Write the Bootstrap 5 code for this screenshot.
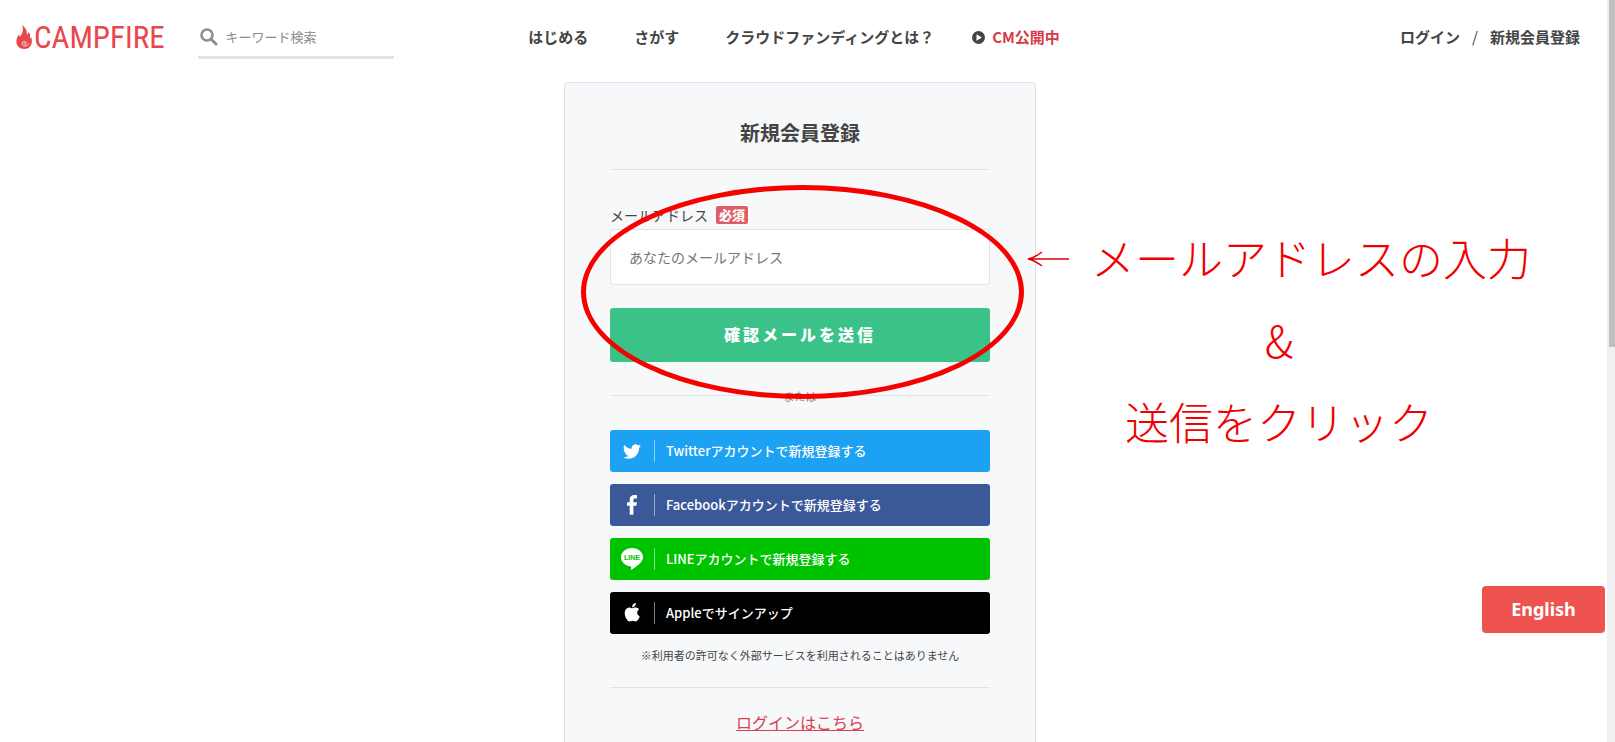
<!DOCTYPE html>
<html lang="ja">
<head>
<meta charset="utf-8">
<meta name="viewport" content="width=device-width, initial-scale=1">
<title>新規会員登録 - CAMPFIRE</title>
<link href="https://cdn.jsdelivr.net/npm/bootstrap@5.3.0/dist/css/bootstrap.min.css" rel="stylesheet">
<style>
  body { font-family: "Noto Sans CJK JP", sans-serif; font-size: 14px; color: #444; background: #fff; }
  .shell { padding-right: 15px; }
  .site-header { height: 74px; display: grid; grid-template-columns: 1fr auto 1fr; padding: 0 20px 0 16px; font-size: 15px; }
  .site-header a { color: #444; text-decoration: none; font-weight: 700; white-space: nowrap; }
  .site-header a.brand { color: #e8474c; font-family: "Roboto Condensed", "Liberation Sans Narrow", Roboto, sans-serif; font-size: 31px; font-weight: 400; line-height: 1; }
  .site-header a.cm { color: #d63c48; gap: 7px; }
  .search { width: 196px; height: 43px; margin: 16px 0 0 33px; padding-top: 2px; border-bottom: 3px solid #e2e2e2; }
  .search svg { margin: 0 8px 0 2px; flex: none; }
  .search input { font-size: 13px; color: #444; }
  .search input::placeholder { color: #8c8c8c; opacity: 1; }
  .main-nav { padding-right: 8px; }
  .main-nav a + a { margin-left: 46px; }
  .main-nav a + a.cm { margin-left: 38px; }
  .stage { display: grid; grid-template-columns: 1fr 472px 1fr; margin-top: 8px; }
  .signup { grid-column: 2; min-height: 860px; background: #f6f8fa; border: 1px solid #dde3ea; border-radius: 4px; padding: 34px 45px; }
  .signup h1 { font-size: 20px; line-height: 32px; font-weight: 700; margin: 0 0 20px; text-align: center; }
  .rule { height: 1px; background: #dfe3e6; }
  .field-head { margin-top: 33px; height: 26px; padding-bottom: 2px; }
  .need { background: #e05c66; color: #fff; font-size: 13px; font-weight: 900; line-height: 18px; border-radius: 2px; padding: 0 3px; }
  .mail { height: 56px; border: 1px solid #e0e4e7; border-radius: 4px; padding: 0 18px; font-size: 14px; }
  .mail::placeholder { color: #757575; opacity: 1; }
  .send { height: 54px; margin-top: 23px; padding: 0 0 2px; background: #3ac288; color: #fff; font-size: 16px; font-weight: 900; letter-spacing: 3px; border-radius: 3px; }
  .send:hover { background: #33b07b; color: #fff; }
  .or-line { height: 20px; margin: 23px 0 25px; font-size: 11px; color: #888; gap: 4px; }
  .or-line span { padding-top: 2px; }
  .sns { height: 42px; margin-bottom: 12px; border-radius: 3px; color: #fff; font-size: 13px; font-weight: 500; text-decoration: none; }
  .sns svg { width: 22px; height: 22px; margin: 0 11px; flex: none; }
  .sns span { border-left: 1px solid rgba(255,255,255,.5); padding-left: 11px; line-height: 22px; }
  .tw { background: #1da1f2; } .fb { background: #3b5998; } .ln { background: #00c300; } .ap { background: #000; }
  .caution { font-size: 11px; line-height: 18px; margin: 0 0 23px; text-align: center; }
  .to-login { font-size: 16px; line-height: 20px; color: #d9414d; }
  .ring { position: absolute; left: 16px; top: 102px; width: 443px; height: 214px; border: 5px solid #f70000; border-radius: 50%; pointer-events: none; }
  .memo { grid-column: 3; margin: 134px 0 0 -9px; width: max-content; text-align: center; color: #f00000; font-size: 44px; line-height: 82px; font-weight: 300; }
  .memo .arrow { width: 42px; height: 18px; margin: 4px 22px 0 0; }
  .lang { position: fixed; right: 10px; top: 586px; width: 123px; height: 47px; padding: 0 0 2px; background: #ef5350; color: #fff; font-family: "Noto Sans", sans-serif; font-size: 18px; line-height: 1; font-weight: 700; border-radius: 4px; }
  .lang:hover { background: #e04542; color: #fff; }
  .track { position: fixed; right: 0; top: 0; bottom: 0; width: 8px; background: #f0f0f0; padding-left: 2px; }
  .track div { height: 347px; background: #c1c1c1; }
</style>
</head>
<body>
<div class="shell vh-100 overflow-hidden">
  <header class="site-header">
    <div class="d-flex">
      <a class="brand d-flex align-items-center" href="#">
        <svg width="18" height="26" viewBox="0 0 18 26" aria-hidden="true"><path fill="#e8474c" d="M6 1c4 3 5.500 6 4.500 9.500 1.200-.3 1.800-1.200 1.800-2.500 3 3 1.300 4.500 1.600 6.200.7-.2 1-.7 1.100-1.200C17.500 19 14.500 25 8.500 25S-.5 20.500.6 15.500C1 13.500 2.200 12 2.800 10.500c.8.800.9 1.700.7 2.500C6.500 10 8 5.500 6 1z"/><path fill="none" stroke="#fff" stroke-width=".9" d="M12.500 19.500c-1 3.500-6.500 3-6.300 0 .1-2.500 4-2.500 3.800-.3-.1 1.200-1.800 1-1.700 0"/></svg><span>CAMPFIRE</span></a>
      <label class="search d-flex align-items-center">
        <svg width="18" height="18" viewBox="0 0 18 18" aria-label="検索"><circle cx="7" cy="7" r="5.500" fill="none" stroke="#8f8f8f" stroke-width="2.600"/><path d="M11 11l5 5" stroke="#8f8f8f" stroke-width="3" stroke-linecap="round"/></svg>
        <input type="text" class="border-0 p-0 w-100 bg-transparent" placeholder="キーワード検索">
      </label>
    </div>
    <nav class="main-nav d-flex align-items-center">
      <a href="#">はじめる</a><a href="#">さがす</a><a href="#">クラウドファンディングとは？</a>
      <a href="#" class="cm d-flex align-items-center"><svg width="13" height="13" viewBox="0 0 13 13" aria-hidden="true"><circle cx="6.500" cy="6.500" r="6.500" fill="#444"/><path fill="#fff" d="M4.500 3.200v6.600l5.300-3.300z"/></svg>CM公開中</a>
    </nav>
    <div class="d-flex align-items-center justify-content-end"><a href="#">ログイン</a><span class="px-2 mx-1">/</span><a href="#">新規会員登録</a></div>
  </header>

  <main class="stage">
    <section class="signup position-relative">
      <h1>新規会員登録</h1>
      <div class="rule"></div>
      <form>
        <div class="field-head d-flex align-items-center gap-2"><label for="mail">メールアドレス</label><span class="need">必須</span></div>
        <input id="mail" type="email" class="mail d-block w-100 bg-white" placeholder="あなたのメールアドレス">
        <button type="button" class="send btn border-0 w-100">確認メールを送信</button>
      </form>
      <div class="or-line d-flex align-items-center"><div class="rule flex-fill"></div><span>または</span><div class="rule flex-fill"></div></div>
      <a href="#" class="sns tw d-flex align-items-center"><svg viewBox="0 0 22 22" aria-hidden="true"><g transform="translate(2 2) scale(1.120)"><path fill="#fff" d="M5.026 15c6.038 0 9.341-5.003 9.341-9.334 0-.14 0-.282-.006-.422A6.685 6.685 0 0 0 16 3.542a6.658 6.658 0 0 1-1.889.518 3.301 3.301 0 0 0 1.447-1.817 6.533 6.533 0 0 1-2.087.793A3.286 3.286 0 0 0 7.875 6.030a9.325 9.325 0 0 1-6.767-3.429 3.289 3.289 0 0 0 1.018 4.382A3.323 3.323 0 0 1 .64 6.575v.045a3.288 3.288 0 0 0 2.632 3.218 3.203 3.203 0 0 1-.865.115 3.230 3.230 0 0 1-.614-.057 3.283 3.283 0 0 0 3.067 2.277A6.588 6.588 0 0 1 .78 13.580a6.320 6.320 0 0 1-.78-.045A9.344 9.344 0 0 0 5.026 15z"/></g></svg><span>Twitterアカウントで新規登録する</span></a>
      <a href="#" class="sns fb d-flex align-items-center"><svg viewBox="0 0 22 22" aria-hidden="true"><path fill="#fff" d="M16 1.200v3.200h-1.900c-1.400 0-1.700.7-1.700 1.700v2.100h3.500l-.5 3.500h-3v9H8.700v-9H6V8.200h2.700V5.600C8.700 2.600 10.500 1 13.300 1c1.200 0 2.300.1 2.700.2z"/></svg><span>Facebookアカウントで新規登録する</span></a>
      <a href="#" class="sns ln d-flex align-items-center"><svg viewBox="0 0 22 22" aria-hidden="true"><path fill="#fff" d="M11 0c6 0 11 4 11 9 0 2-.8 3.800-2.400 5.500C17.300 17.200 12.200 21 11 21.500c-1.200.5-1-.3-.9-.6l.1-.9c0-.7 0-1.500-.9-1.700C4 17.600 0 13.800 0 9c0-5 5-9 11-9z"/><text x="11" y="12" text-anchor="middle" font-family="Liberation Sans" font-weight="700" font-size="7" fill="#00c300">LINE</text></svg><span>LINEアカウントで新規登録する</span></a>
      <a href="#" class="sns ap d-flex align-items-center"><svg viewBox="0 0 22 22" aria-hidden="true"><g transform="translate(2 1) scale(1.150)"><path fill="#fff" d="M11.182.008C11.148-.030 9.923.023 8.857 1.180c-1.066 1.156-.902 2.482-.878 2.516.024.034 1.520.087 2.475-1.258.955-1.345.762-2.391.728-2.430zm3.314 11.733c-.048-.096-2.325-1.234-2.113-3.422.212-2.189 1.675-2.789 1.698-2.854.023-.065-.597-.790-1.254-1.157a3.692 3.692 0 0 0-1.563-.434c-.108-.003-.483-.095-1.254.116-.508.139-1.653.589-1.968.607-.316.018-1.256-.522-2.267-.665-.647-.125-1.333.131-1.824.328-.490.196-1.422.754-2.074 2.237-.652 1.482-.311 3.830-.067 4.560.244.729.625 1.924 1.273 2.796.576.984 1.340 1.667 1.659 1.899.319.232 1.219.386 1.843.067.502-.308 1.408-.485 1.766-.472.357.013 1.061.154 1.782.539.571.197 1.111.115 1.652-.105.541-.221 1.324-1.059 2.238-2.758.347-.790.505-1.217.473-1.282z"/></g></svg><span>Appleでサインアップ</span></a>
      <p class="caution">※利用者の許可なく外部サービスを利用されることはありません</p>
      <div class="rule mb-4"></div>
      <div class="text-center"><a href="#" class="to-login">ログインはこちら</a></div>
      <div class="ring"></div>
    </section>
    <aside class="memo position-relative">
      <div class="d-flex align-items-center"><svg class="arrow" viewBox="0 0 42 18" aria-label="←"><path fill="none" stroke="#e00000" stroke-width="1.500" d="M15 2C11 5 7 8 1 9c6 1 10 4 14 7M1 9h41"/></svg>メールアドレスの入力</div>
      <div>&amp;</div>
      <div>送信をクリック</div>
    </aside>
  </main>
</div>
<button type="button" class="lang btn border-0">English</button>
<div class="track" aria-hidden="true"><div></div></div>
<script src="https://cdn.jsdelivr.net/npm/bootstrap@5.3.0/dist/js/bootstrap.bundle.min.js"></script>
</body>
</html>
